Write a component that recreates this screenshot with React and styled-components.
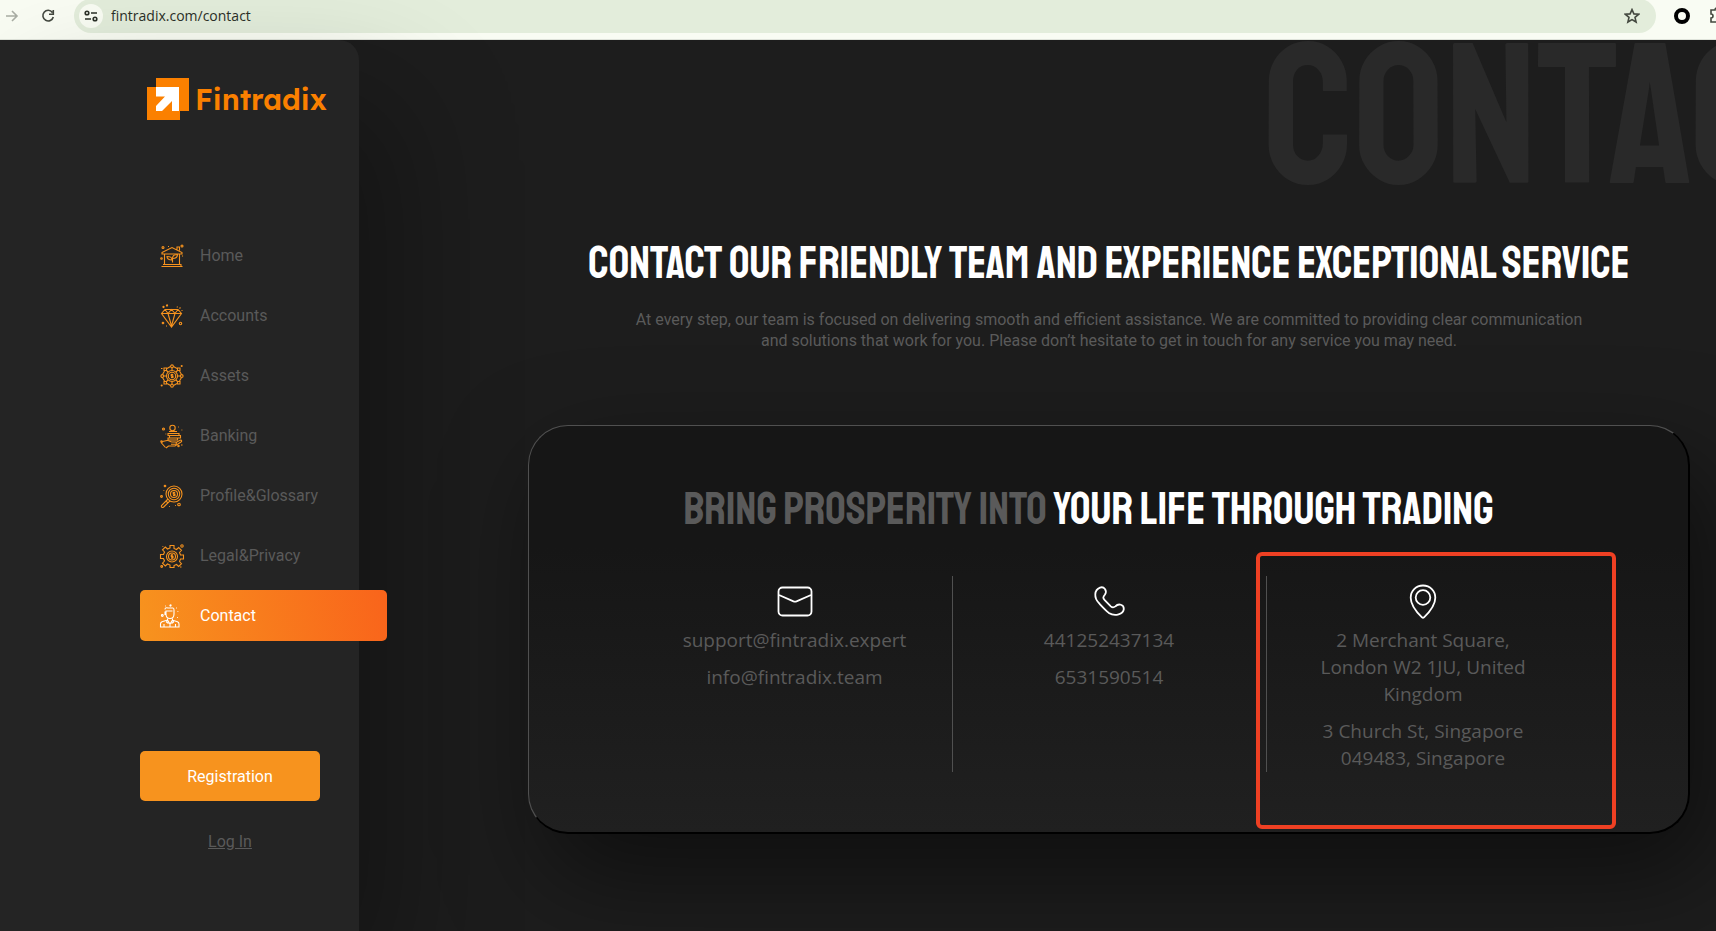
import React from 'react';
import styled, {createGlobalStyle} from 'styled-components';

export default function App() {
    return (
        <>
        <GlobalStyle />
        <Window>
            <BrowserBar />
            <Page>
                <SideBar />
                <Content />
            </Page>
        </Window>
        </>
    )
}

function BrowserBar() {
    return (
        <Toolbar>
            <ToolButton aria-label="Forward" disabled>
                <svg width="14" height="14" viewBox="0 0 14 14"><path d="M1 7h11M7 2l5 5-5 5" /></svg>
            </ToolButton>
            <ToolButton aria-label="Reload" $space>
                <svg width="14" height="14" viewBox="0 0 14 14"><path d="M11.4 3.4A5.3 5.3 0 1 0 12.3 8M12.3 1v4.2H8" /></svg>
            </ToolButton>
            <AddressBar>
                <SiteInfo aria-label="Site information">
                    <svg width="14" height="12" viewBox="0 0 14 12">
                        <circle cx="3" cy="3" r="1.8" />
                        <path d="M7 3h6M1 9h6" />
                        <circle cx="11" cy="9" r="1.8" />
                    </svg>
                </SiteInfo>
                <Address aria-label="Address" defaultValue="fintradix.com/contact" />
                <ToolButton aria-label="Bookmark">
                    <svg width="16" height="16" viewBox="0 0 16 16"><path d="M8 1.6l1.9 4.3 4.7.4-3.6 3.1 1.1 4.6L8 11.6 3.9 14 5 9.4 1.4 6.3l4.7-.4z" /></svg>
                </ToolButton>
            </AddressBar>
            <Extension aria-label="Extension" />
            <Puzzle aria-label="Extensions">
                <svg width="16" height="18" viewBox="0 0 16 18"><path d="M1 3h4a2 2 0 0 1 4 0h4v12H1v-4a2 2 0 0 0 0-4z" /></svg>
            </Puzzle>
        </Toolbar>
    )
}

function SideBar() {
    return (
        <SideBarStyle>
            <Logo href="#">
                <svg width="42" height="42" viewBox="0 0 42 42">
                    <path fill="#fb8000" d="M9 0h33v33H9zM0 9h33v33H0z" />
                    <path fill="#fff" d="M9 9h23v24h-7V23L15 33H9v-5l9-9.500H9z" />
                </svg>
                Fintradix
            </Logo>
            <Nav>
                {links.map(({name, Icon}) => (
                    <NavLink key={name} href="#" $active={name === 'Contact'}>
                        <NavIcon viewBox="0 0 24 24"><Icon /></NavIcon>
                        {name}
                    </NavLink>
                ))}
            </Nav>
            <Actions>
                <Register type="button">Registration</Register>
                <LogIn href="#">Log In</LogIn>
            </Actions>
        </SideBarStyle>
    )
}

function Content() {
    return (
        <ContentStyle>
            <Watermark>CONTACT</Watermark>
            <Heading>CONTACT OUR FRIENDLY TEAM AND EXPERIENCE EXCEPTIONAL SERVICE</Heading>
            <Intro>
                At every step, our team is focused on delivering smooth and efficient assistance. We are committed to
                providing clear communication and solutions that work for you. Please don’t hesitate to get in touch
                for any service you may need.
            </Intro>
            <Card>
                <CardTitle><span>BRING PROSPERITY INTO</span> YOUR LIFE THROUGH TRADING</CardTitle>
                <Columns>
                    <Column>
                        <svg width="36" height="36" viewBox="0 0 36 36">
                            <rect x="1.500" y="3.500" width="33" height="28" rx="4" />
                            <path d="M2 11l14.500 6.300q1.500.6 3 0L34 11" />
                        </svg>
                        <p>support@fintradix.expert</p>
                        <p>info@fintradix.team</p>
                    </Column>
                    <Column>
                        <svg width="36" height="36" viewBox="0 0 36 36">
                            <path d="M9 3.600c4-1.400 7.500 3 5 6.900-2 2.600-2.400 3.500-.3 5.700l6.100 6.100c1.600 1.500 2.800 1.500 4.600.1 3-3.300 8.700-2 8.400 2.700-.5 4.600-8.400 8-15 3.800-3-2.400-6.600-6.300-9.800-9.700C2.600 13.700 3.200 5.800 9 3.600z" />
                        </svg>
                        <p>441252437134</p>
                        <p>6531590514</p>
                    </Column>
                    <Column>
                        <svg width="36" height="36" viewBox="0 0 36 36">
                            <path d="M18 1.500c-7.200 0-12.300 5.500-12.300 12.200 0 7.500 6.300 14.800 11.300 19.600q1 .9 2 0c5-4.800 11.300-12.100 11.300-19.600C30.300 7 25.200 1.500 18 1.500z" />
                            <circle cx="18" cy="13.500" r="7.300" />
                        </svg>
                        <p>2 Merchant Square, London W2 1JU, United Kingdom</p>
                        <p>3 Church St, Singapore 049483, Singapore</p>
                        <Marker />
                    </Column>
                </Columns>
            </Card>
        </ContentStyle>
    )
}

const HomeIcon = () => (
    <>
        <path d="M1.500 22.500h21M3 20.500h18v2M4.500 20V9.500M19.500 20V9.500M2 8.500l10-5 10 5v1.500H2zM17 5.500V3h2.500v3.500" />
        <path d="M12.500 18.500v-4c0-3 2.500-4 5-4 0 3-2 4-5 4M12 16c-3.500 0-5-1.500-5-3.500 3 0 5 .5 5 3.500" />
        <circle cx="22" cy="2" r="1" /><circle cx="3" cy="3.500" r="1" /><circle cx="1.500" cy="14.500" r=".8" />
        <path d="M8 2.500h1M22.500 11.500v1" />
    </>
)

const AccountsIcon = () => (
    <>
        <path d="M5 5.500h13l3.500 4L11.500 23 1.500 9.500zM1.500 9.500h20M5 5.500l3 4 3.500-4 3.500 4 3-4M8 9.500L11.500 22 15 9.500" />
        <circle cx="20.500" cy="19.500" r="1.200" /><circle cx="3" cy="19" r=".8" /><circle cx="3.500" cy="3" r=".6" /><circle cx="7" cy="1.500" r=".6" />
        <path d="M17 3.500l.5-1M19.500 4.500l1-1M21.500 6.500h1M6 22h1" />
    </>
)

const AssetsIcon = () => (
    <>
        <circle cx="12" cy="12" r="5.500" /><circle cx="12" cy="12" r="3.700" />
        <path d="M13.200 10.500h-2v1.500h1.800v1.500h-2M12 9.700v4.600M6 6l2 2M18 6l-2 2M6 18l2-2M18 18l-2-2M12 4v2.500M12 17.500V20M4 12h2.500M17.500 12H20M7 4.500l3.500-2M17 4.500l-3.500-2M7 19.500l3.500 2M17 19.500l-3.500 2M4.500 7L2.500 10.500M4.500 17l-2-3.500M19.500 7l2 3.500M19.500 17l2-3.500" />
        <circle cx="12" cy="2.300" r="1.400" /><circle cx="12" cy="21.700" r="1.400" /><circle cx="2.300" cy="12" r="1.400" /><circle cx="21.700" cy="12" r="1.400" />
        <path d="M4 4h2.500v2.500H4zM17.500 4H20v2.500h-2.500zM4 17.500h2.500V20H4zM17.500 17.500H20V20h-2.500z" />
        <circle cx="21.700" cy="2" r=".5" /><circle cx="1.700" cy="21.500" r=".5" /><path d="M1 4.500h1.500" />
    </>
)

const BankingIcon = () => (
    <>
        <circle cx="12.500" cy="4" r="2.700" />
        <path d="M9 7.500h8M8 9.500h11v2H8zM9.500 11.500h11v2.500h-11zM8 14h9.500v2H8z" />
        <path d="M2.500 17.500L7 16.500c2.500-.3 3 1.500 5 1.500h3.500c1.500.5 1 2.300-.5 2.300h-4M16 18.500l4.500-2.500c1.500 0 1.500 1.300.5 2L15 22H8.500L6 24M2.500 17.500L1.500 19l4 4.500" />
        <circle cx="3.500" cy="5" r="1" /><circle cx="1.500" cy="17.500" r=".7" /><circle cx="18.500" cy="22" r=".7" /><path d="M18 3h.8M21.500 6h.8M21 21h1.500M5.500 10h.8" />
    </>
)

const ProfileIcon = () => (
    <>
        <circle cx="14" cy="10" r="8" /><circle cx="14" cy="10" r="5.700" /><circle cx="14" cy="10" r="3.500" />
        <path d="M15.200 8.500h-2V10H15v1.500h-2M14 7.700v4.600M8 15l-6.500 6.500c-.7 1.800.8 2.500 2.200 1.500L10 16.800M6 17l1.700 1.700" />
        <circle cx="19" cy="20.500" r="1.300" /><circle cx="5" cy="2" r=".8" /><circle cx="1.500" cy="12.500" r=".9" /><path d="M3.500 6.500h.8M9 22.500h.8M15 21.500h.8" />
    </>
)

const LegalIcon = () => (
    <>
        <path d="M10 1.500h4v3l2.500 1 2.200-2 2.800 2.800-2 2.200 1 2.500h3v4h-3l-1 2.500 2 2.200-2.800 2.800-2.200-2-2.500 1v2h-4v-2.500l-2.500-1-2.200 2-2.800-2.800 2-2.200-1-2.500H.5v-4h3l1-2.500-2-2.200 2.800-2.800 2.200 2 2.500-1z" />
        <circle cx="12" cy="12.500" r="5.500" /><circle cx="12" cy="12.500" r="3.500" />
        <path d="M13.200 11h-2v1.500H13V14h-2M12 10v5" />
        <circle cx="22" cy="2" r="1.200" /><circle cx="1.700" cy="22.500" r=".9" /><path d="M2.500 2.500h.8M20 23h1.500" />
    </>
)

const ContactIcon = () => (
    <>
        <path d="M5 5.500C5 4 6 3.500 8 4h5c1 0 1 1 1 2v4c0 3-1.500 4.500-4 4.500S6 13 6 10V7h6.500M6 10.500H5v-3M14 7.500v3" />
        <path d="M7.500 14.500v1.500l2.500 4 2.500-4v-1.500M7.500 16l-1 2 2 1.500M12.500 16l1 2-2 1.500M6.800 16.200L2 17.800q-1.500.7-1.500 2.200v3h18.500v-3q0-1.500-1.500-2.200l-4.800-1.600M4 20v3M15.500 20v3M10 20v3" />
        <circle cx="10.500" cy="1.500" r=".6" /><circle cx="2.300" cy="11.500" r=".9" /><path d="M5 2h.8M16 4h.8M17.500 7.500h.8M17 13.500h.8" />
    </>
)

const links = [
    {name: 'Home', Icon: HomeIcon},
    {name: 'Accounts', Icon: AccountsIcon},
    {name: 'Assets', Icon: AssetsIcon},
    {name: 'Banking', Icon: BankingIcon},
    {name: 'Profile&Glossary', Icon: ProfileIcon},
    {name: 'Legal&Privacy', Icon: LegalIcon},
    {name: 'Contact', Icon: ContactIcon},
]

const GlobalStyle = createGlobalStyle`
    :root {
        --orange: #f7931e;
        --grey: #5a5a5a;
        --dark: #1d1d1d;
        --panel: #242424;
    }

    * {
        box-sizing: border-box;
    }

    body {
        margin: 0;
        background: var(--dark);
        font-family: Roboto, "Liberation Sans", sans-serif;
        font-size: 16px;
        color: var(--grey);
    }

    h1, h2, p {
        margin: 0;
    }

    button, input {
        border: 0;
        padding: 0;
        background: none;
        font: inherit;
    }
`

const Window = styled.div`
    display: flex;
    flex-direction: column;
    min-height: 100vh;
    overflow: hidden;
`

const Toolbar = styled.header`
    display: flex;
    align-items: center;
    height: 40px;
    padding: 0 0 8px 5px;
    overflow: hidden;
    background: #f9fcf3;
    border-bottom: 1px solid #dfe3da;
`

const ToolButton = styled.button`
    display: flex;
    flex: none;
    margin-right: ${({$space}) => $space ? '19px' : '0'};
    margin-left: ${({$space}) => $space ? '22px' : '0'};

    svg {
        fill: none;
        stroke: #43483f;
        stroke-width: 1.600;
    }

    &:disabled svg {
        stroke: #a9ada4;
    }
`

/* runs out of the window on the right */
const Puzzle = styled(ToolButton)`
    margin-right: -10px;
`

const AddressBar = styled.div`
    display: flex;
    flex: 1;
    align-items: center;
    height: 34px;
    padding: 0 16px 0 5px;
    border-radius: 17px;
    background: #e3eddb;
`

const SiteInfo = styled.button`
    display: flex;
    align-items: center;
    justify-content: center;
    width: 24px;
    height: 24px;
    border-radius: 50%;
    background: #f9fcf3;

    svg {
        fill: none;
        stroke: #2b3028;
        stroke-width: 1.600;
    }
`

const Address = styled.input`
    flex: 1;
    min-width: 0;
    margin-left: 8px;
    font-family: "Open Sans", sans-serif;
    font-size: 14px;
    color: #2b3028;
    outline: none;
`

const Extension = styled.button`
    width: 16px;
    height: 16px;
    margin: 0 20px 0 18px;
    flex: none;
    border: 4px solid #000;
    border-radius: 8px;
`

const Page = styled.div`
    display: flex;
    flex: 1;
`

const SideBarStyle = styled.aside`
    flex: none;
    width: 359px;
    padding: 38px 0 78px 140px;
    border-top-right-radius: 20px;
    background: var(--panel);
    box-shadow: 40px 60px 120px rgba(0, 0, 0, 0.3);
`

const Logo = styled.a`
    display: flex;
    align-items: center;
    gap: 6px;
    margin-left: 7px;
    color: #fb8000;
    font-family: Lexend, Inter, sans-serif;
    font-size: 29px;
    font-weight: 600;
    line-height: 42px;
    text-decoration: none;
`

const Nav = styled.nav`
    display: flex;
    flex-direction: column;
    gap: 9px;
    margin-top: 110px;
`

const NavLink = styled.a`
    display: flex;
    align-items: center;
    gap: 16px;
    height: 51px;
    margin-right: -28px;
    padding-left: 20px;
    border-radius: 5px;
    color: ${({$active}) => $active ? '#fff' : 'var(--grey)'};
    text-decoration: none;
    background: ${({$active}) => $active ? 'linear-gradient(80deg, #f7931e, #f9641b)' : 'none'};

    svg {
        stroke: ${({$active}) => $active ? '#fff' : 'var(--orange)'};
    }
`

const NavIcon = styled.svg`
    width: 24px;
    height: 24px;
    fill: none;
    stroke-width: 1.100;
    overflow: visible;
`

const Actions = styled.div`
    display: flex;
    flex-direction: column;
    align-items: center;
    gap: 31px;
    width: 180px;
    margin-top: 110px;
`

const Register = styled.button`
    width: 100%;
    height: 50px;
    border-radius: 5px;
    background: var(--orange);
    color: #fff;
`

const LogIn = styled.a`
    color: var(--grey);
`

const ContentStyle = styled.main`
    flex: 1;
    min-width: 0;
    padding: 0 26px 0 169px;
    text-align: center;
`

const Watermark = styled.div`
    width: 453px;
    margin: 0 -26px 0 auto;
    overflow: hidden;
    color: #292929;
    font-family: Staatliches, "Bebas Neue", sans-serif;
    font-size: 200px;
    line-height: 156px;
    text-align: left;
    white-space: nowrap;
`

const Heading = styled.h1`
    margin-top: 41px;
    color: #fff;
    font-family: Staatliches, "Bebas Neue", sans-serif;
    font-size: 45px;
    font-weight: 400;
    line-height: 54px;
`

const Intro = styled.p`
    max-width: 960px;
    margin: 18px auto 74px;
    line-height: 21px;
`

const Card = styled.section`
    padding: 54px 20px 60px;
    border: 1px solid #505050;
    border-right: 2px solid #000;
    border-bottom: 2px solid #000;
    border-radius: 40px;
    background: linear-gradient(#161616 30%, #202020);
    box-shadow: 20px 40px 100px rgba(0, 0, 0, 0.5);
`

const CardTitle = styled.h2`
    margin-bottom: 36px;
    padding-right: 40px;
    color: #fff;
    font-family: Staatliches, "Bebas Neue", sans-serif;
    font-size: 45px;
    font-weight: 400;
    line-height: 60px;

    span {
        color: var(--grey);
    }
`

const Columns = styled.div`
    display: grid;
    grid-template-columns: repeat(3, 1fr);
    max-width: 942px;
    margin: 0 auto;
`

const Column = styled.div`
    position: relative;
    padding: 8px 40px 0;
    font-family: "Open Sans", sans-serif;
    font-size: 19px;
    line-height: 27px;

    & + & {
        border-left: 1px solid #505050;
    }

    svg {
        display: block;
        margin: 0 auto 7px;
        fill: none;
        stroke: #fff;
        stroke-width: 1.800;
    }

    p + p {
        margin-top: 10px;
    }
`

const Marker = styled.div`
    position: absolute;
    inset: -24px -36px -57px -11px;
    border: 4px solid #ef4023;
    border-radius: 6px;
`
